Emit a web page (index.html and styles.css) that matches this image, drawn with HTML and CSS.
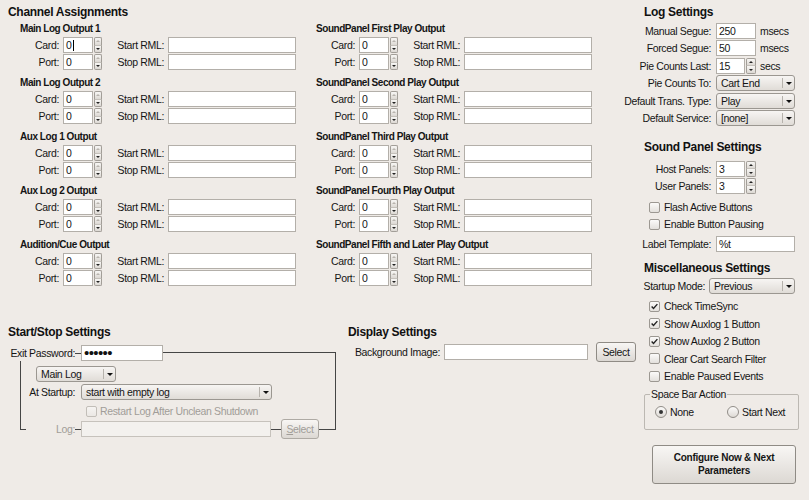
FILE: index.html
```html
<!DOCTYPE html>
<html>
<head>
<meta charset="utf-8">
<title>RDAirPlay Configuration</title>
<link rel="stylesheet" href="styles.css">
</head>
<body>
<div class="page">
  <div class="left">
    <div class="title ch-title">Channel Assignments</div>
    <div class="channels">
      <div class="col">
        <div class="group">
          <div class="ghead">Main Log Output 1</div>
          <div class="grow"><span class="lbl">Card:</span><span class="spin"><span class="field">0<span class="caret"></span></span><span class="btns"><i class="up dim"></i><i class="dn"></i></span></span><span class="lbl">Start RML:</span><span class="input"></span></div>
          <div class="grow"><span class="lbl">Port:</span><span class="spin"><span class="field">0</span><span class="btns"><i class="up dim"></i><i class="dn"></i></span></span><span class="lbl">Stop RML:</span><span class="input"></span></div>
        </div>
        <div class="group">
          <div class="ghead">Main Log Output 2</div>
          <div class="grow"><span class="lbl">Card:</span><span class="spin"><span class="field">0</span><span class="btns"><i class="up dim"></i><i class="dn"></i></span></span><span class="lbl">Start RML:</span><span class="input"></span></div>
          <div class="grow"><span class="lbl">Port:</span><span class="spin"><span class="field">0</span><span class="btns"><i class="up dim"></i><i class="dn"></i></span></span><span class="lbl">Stop RML:</span><span class="input"></span></div>
        </div>
        <div class="group">
          <div class="ghead">Aux Log 1 Output</div>
          <div class="grow"><span class="lbl">Card:</span><span class="spin"><span class="field">0</span><span class="btns"><i class="up dim"></i><i class="dn"></i></span></span><span class="lbl">Start RML:</span><span class="input"></span></div>
          <div class="grow"><span class="lbl">Port:</span><span class="spin"><span class="field">0</span><span class="btns"><i class="up dim"></i><i class="dn"></i></span></span><span class="lbl">Stop RML:</span><span class="input"></span></div>
        </div>
        <div class="group">
          <div class="ghead">Aux Log 2 Output</div>
          <div class="grow"><span class="lbl">Card:</span><span class="spin"><span class="field">0</span><span class="btns"><i class="up dim"></i><i class="dn"></i></span></span><span class="lbl">Start RML:</span><span class="input"></span></div>
          <div class="grow"><span class="lbl">Port:</span><span class="spin"><span class="field">0</span><span class="btns"><i class="up dim"></i><i class="dn"></i></span></span><span class="lbl">Stop RML:</span><span class="input"></span></div>
        </div>
        <div class="group">
          <div class="ghead">Audition/Cue Output</div>
          <div class="grow"><span class="lbl">Card:</span><span class="spin"><span class="field">0</span><span class="btns"><i class="up dim"></i><i class="dn"></i></span></span><span class="lbl">Start RML:</span><span class="input"></span></div>
          <div class="grow"><span class="lbl">Port:</span><span class="spin"><span class="field">0</span><span class="btns"><i class="up dim"></i><i class="dn"></i></span></span><span class="lbl">Stop RML:</span><span class="input"></span></div>
        </div>
      </div>
      <div class="col">
        <div class="group">
          <div class="ghead">SoundPanel First Play Output</div>
          <div class="grow"><span class="lbl">Card:</span><span class="spin"><span class="field">0</span><span class="btns"><i class="up dim"></i><i class="dn"></i></span></span><span class="lbl">Start RML:</span><span class="input"></span></div>
          <div class="grow"><span class="lbl">Port:</span><span class="spin"><span class="field">0</span><span class="btns"><i class="up dim"></i><i class="dn"></i></span></span><span class="lbl">Stop RML:</span><span class="input"></span></div>
        </div>
        <div class="group">
          <div class="ghead">SoundPanel Second Play Output</div>
          <div class="grow"><span class="lbl">Card:</span><span class="spin"><span class="field">0</span><span class="btns"><i class="up dim"></i><i class="dn"></i></span></span><span class="lbl">Start RML:</span><span class="input"></span></div>
          <div class="grow"><span class="lbl">Port:</span><span class="spin"><span class="field">0</span><span class="btns"><i class="up dim"></i><i class="dn"></i></span></span><span class="lbl">Stop RML:</span><span class="input"></span></div>
        </div>
        <div class="group">
          <div class="ghead">SoundPanel Third Play Output</div>
          <div class="grow"><span class="lbl">Card:</span><span class="spin"><span class="field">0</span><span class="btns"><i class="up dim"></i><i class="dn"></i></span></span><span class="lbl">Start RML:</span><span class="input"></span></div>
          <div class="grow"><span class="lbl">Port:</span><span class="spin"><span class="field">0</span><span class="btns"><i class="up dim"></i><i class="dn"></i></span></span><span class="lbl">Stop RML:</span><span class="input"></span></div>
        </div>
        <div class="group">
          <div class="ghead">SoundPanel Fourth Play Output</div>
          <div class="grow"><span class="lbl">Card:</span><span class="spin"><span class="field">0</span><span class="btns"><i class="up dim"></i><i class="dn"></i></span></span><span class="lbl">Start RML:</span><span class="input"></span></div>
          <div class="grow"><span class="lbl">Port:</span><span class="spin"><span class="field">0</span><span class="btns"><i class="up dim"></i><i class="dn"></i></span></span><span class="lbl">Stop RML:</span><span class="input"></span></div>
        </div>
        <div class="group">
          <div class="ghead">SoundPanel Fifth and Later Play Output</div>
          <div class="grow"><span class="lbl">Card:</span><span class="spin"><span class="field">0</span><span class="btns"><i class="up dim"></i><i class="dn"></i></span></span><span class="lbl">Start RML:</span><span class="input"></span></div>
          <div class="grow"><span class="lbl">Port:</span><span class="spin"><span class="field">0</span><span class="btns"><i class="up dim"></i><i class="dn"></i></span></span><span class="lbl">Stop RML:</span><span class="input"></span></div>
        </div>
      </div>
    </div>

    <div class="bottom">
      <div class="startstop">
        <div class="frame"></div>
        <div class="bracket"></div>
        <div class="title sst">Start/Stop Settings</div>
        <div class="ssrow r1"><span class="sl">Exit Password:</span><span class="dash"></span><span class="input pw">&#8226;&#8226;&#8226;&#8226;&#8226;&#8226;</span></div>
        <div class="ssrow r2"><span class="combo mainlog"><span class="ctext">Main Log</span><span class="carrow"></span></span></div>
        <div class="ssrow r3"><span class="sl">At Startup:</span><span class="combo startup"><span class="ctext">start with empty log</span><span class="carrow"></span></span></div>
        <div class="ssrow r4"><span class="cb disabled"></span><span class="distext">Restart Log After Unclean Shutdown</span></div>
        <div class="ssrow r5"><span class="sl distext">Log:</span><span class="dash"></span><span class="input login"></span><span class="spacer"></span><span class="btn selbtn distext"><u>S</u>elect</span></div>
      </div>
      <div class="display">
        <div class="title dst">Display Settings</div>
        <div class="drow"><span class="dl">Background Image:</span><span class="input bgimg"></span><span class="btn bgsel">Select</span></div>
      </div>
    </div>
  </div>

  <div class="right">
    <div class="title rt log-t">Log Settings</div>
    <div class="rows">
      <div class="frow"><span class="rl">Manual Segue:</span><span class="input w40 txt">250</span><span class="unit">msecs</span></div>
      <div class="frow"><span class="rl">Forced Segue:</span><span class="input w40 txt">50</span><span class="unit">msecs</span></div>
      <div class="frow"><span class="rl">Pie Counts Last:</span><span class="spin r"><span class="field">15</span><span class="btns"><i class="up"></i><i class="dn"></i></span></span><span class="unit">secs</span></div>
      <div class="frow"><span class="rl">Pie Counts To:</span><span class="combo w79"><span class="ctext">Cart End</span><span class="carrow"></span></span></div>
      <div class="frow"><span class="rl">Default Trans. Type:</span><span class="combo w79"><span class="ctext">Play</span><span class="carrow"></span></span></div>
      <div class="frow"><span class="rl">Default Service:</span><span class="combo w79"><span class="ctext">[none]</span><span class="carrow"></span></span></div>
    </div>

    <div class="title rt sp-t">Sound Panel Settings</div>
    <div class="rows tight">
      <div class="frow"><span class="rl">Host Panels:</span><span class="spin r"><span class="field">3</span><span class="btns"><i class="up"></i><i class="dn"></i></span></span></div>
      <div class="frow"><span class="rl">User Panels:</span><span class="spin r"><span class="field">3</span><span class="btns"><i class="up"></i><i class="dn"></i></span></span></div>
    </div>
    <div class="cbs sp-cbs">
      <div class="cbrow"><span class="cb"></span><span>Flash Active Buttons</span></div>
      <div class="cbrow"><span class="cb"></span><span>Enable Button Pausing</span></div>
    </div>
    <div class="frow tmpl"><span class="rl">Label Template:</span><span class="input w79 txt">%t</span></div>

    <div class="title rt misc-t">Miscellaneous Settings</div>
    <div class="frow startup-row"><span class="rl sm">Startup Mode:</span><span class="combo w86"><span class="ctext">Previous</span><span class="carrow"></span></span></div>
    <div class="cbs misc-cbs">
      <div class="cbrow"><span class="cb"><svg viewBox="0 0 11 11" width="9" height="9"><path d="M2 5.6 L4.3 8 L9 2.6" fill="none" stroke="#222" stroke-width="1.7"/></svg></span><span>Check TimeSync</span></div>
      <div class="cbrow"><span class="cb"><svg viewBox="0 0 11 11" width="9" height="9"><path d="M2 5.6 L4.3 8 L9 2.6" fill="none" stroke="#222" stroke-width="1.7"/></svg></span><span>Show Auxlog 1 Button</span></div>
      <div class="cbrow"><span class="cb"><svg viewBox="0 0 11 11" width="9" height="9"><path d="M2 5.6 L4.3 8 L9 2.6" fill="none" stroke="#222" stroke-width="1.7"/></svg></span><span>Show Auxlog 2 Button</span></div>
      <div class="cbrow"><span class="cb"></span><span>Clear Cart Search Filter</span></div>
      <div class="cbrow"><span class="cb"></span><span>Enable Paused Events</span></div>
    </div>
    <div class="gbox">
      <span class="legend">Space Bar Action</span>
      <div class="radios">
        <span class="ritem first"><span class="rb on"></span><span>None</span></span>
        <span class="ritem"><span class="rb"></span><span>Start Next</span></span>
      </div>
    </div>
    <div class="btn bigbtn">Configure Now &amp; Next<br>Parameters</div>
  </div>
</div>
</body>
</html>
```

FILE: styles.css
```css
* { box-sizing: border-box; }
html, body { margin: 0; padding: 0; }
body {
  background: #efebe7;
  font-family: "Liberation Sans", Arial, sans-serif;
  font-size: 10.5px;
  letter-spacing: -0.35px;
  color: #151515;
  width: 809px;
  height: 500px;
  overflow: hidden;
}
.page { display: flex; width: 809px; height: 500px; }
.left { width: 620px; flex: none; }
.right { width: 189px; flex: none; }

.title {
  font-weight: bold;
  font-size: 12px;
  letter-spacing: -0.3px;
  line-height: 14px;
  height: 14px;
  color: #111;
  white-space: nowrap;
}
.ch-title { padding-left: 8px; margin-top: 5px; margin-bottom: 1px; }

.channels { display: flex; padding-left: 20px; }
.col { width: 296px; flex: none; }
.group { height: 54px; }
.ghead {
  font-weight: bold;
  font-size: 10px;
  letter-spacing: -0.45px;
  line-height: 17px;
  height: 17px;
  white-space: nowrap;
}
.grow {
  display: grid;
  grid-template-columns: 39px 39px 58px 128px;
  column-gap: 4px;
  height: 17px;
}
.lbl { text-align: right; line-height: 16px; white-space: nowrap; }

.input {
  display: block;
  height: 16px;
  background: #fff;
  border: 1px solid #b3afa9;
  line-height: 14px;
  padding-left: 2px;
  white-space: nowrap;
}
.w40 { width: 40px; }
.w79 { width: 79px; }
.w86 { width: 86px; }

/* spin box */
.spin { display: flex; height: 16px; width: 39px; }
.spin .field {
  width: 30px;
  height: 16px;
  background: #fff;
  border: 1px solid #b3afa9;
  padding-left: 2px;
  line-height: 14px;
  display: flex;
  align-items: center;
}
.caret { display: inline-block; width: 1px; height: 11px; background: #000; margin-left: 1px; }
.spin .btns { width: 8px; margin-left: 1px; display: flex; flex-direction: column; }
.spin.r { width: 40px; }
.spin.r .field { width: 29px; }
.spin.r .btns { width: 10px; }
.spin .btns i {
  flex: 1;
  display: block;
  border: 1px solid #a29e98;
  background: linear-gradient(#f8f7f5, #dcd8d3);
  position: relative;
}
.spin .btns i.up { border-radius: 2px 2px 0 0; border-bottom-color: #c4c0ba; }
.spin .btns i.dn { border-radius: 0 0 2px 2px; border-top: none; }
.spin .btns i::after {
  content: "";
  position: absolute;
  left: 50%;
  top: 50%;
  margin-left: -2px;
  margin-top: -1px;
  border-left: 2px solid transparent;
  border-right: 2px solid transparent;
}
.spin .btns i.up::after { border-bottom: 2px solid #222; }
.spin .btns i.dn::after { border-top: 2px solid #222; }
.spin .btns i.dim::after { border-bottom-color: #b8b4ae; }

/* combo */
.combo {
  display: flex;
  height: 16px;
  border: 1px solid #9b9791;
  border-radius: 3px;
  background: linear-gradient(#f7f5f3, #e0dcd7);
}
.ctext { flex: 1; padding-left: 4px; line-height: 14px; white-space: nowrap; overflow: hidden; }
.carrow {
  width: 12px;
  flex: none;
  border-left: 1px solid #b6b2ac;
  margin: 2px 0;
  position: relative;
}
.carrow::after {
  content: "";
  position: absolute;
  left: 50%;
  top: 50%;
  margin-left: -3px;
  margin-top: -1px;
  border-left: 3px solid transparent;
  border-right: 3px solid transparent;
  border-top: 3px solid #111;
}

/* buttons */
.btn {
  display: flex;
  align-items: center;
  justify-content: center;
  border: 1px solid #8f8b85;
  border-radius: 3px;
  background: linear-gradient(#f8f6f4, #dcd8d3);
  white-space: nowrap;
}

/* checkbox / radio */
.cb {
  width: 11px;
  height: 11px;
  flex: none;
  border: 1px solid #9c9892;
  border-radius: 2px;
  background: linear-gradient(#fbfaf9, #e3e0dc);
  display: flex;
  align-items: center;
  justify-content: center;
}
.cb svg { display: block; }
.cb.disabled { border-color: #c2beb8; background: linear-gradient(#f6f4f2, #ebe8e4); }
.rb {
  width: 12px;
  height: 12px;
  flex: none;
  border: 1px solid #918d88;
  border-radius: 50%;
  background: linear-gradient(#fbfaf9, #dedad5);
  position: relative;
}
.rb.on::after {
  content: "";
  position: absolute;
  left: 3px;
  top: 3px;
  width: 4px;
  height: 4px;
  border-radius: 50%;
  background: #333;
}
.distext { color: #a19d98; }

/* start/stop */
.bottom { display: flex; margin-top: 34px; }
.startstop { position: relative; z-index: 0; width: 348px; flex: none; height: 120px; }
.frame {
  position: absolute;
  z-index: -1;
  left: 163px;
  top: 28px;
  width: 173px;
  height: 78px;
  border-top: 1px solid #454545;
  border-right: 1px solid #454545;
  border-bottom: 1px solid #454545;
}
.bracket {
  position: absolute;
  z-index: -1;
  left: 20px;
  top: 37px;
  width: 6px;
  height: 69px;
  border-left: 1px solid #454545;
  border-bottom: 1px solid #454545;
}
.sst { padding-left: 8px; line-height: 16px; height: 16px; }
.ssrow { display: flex; align-items: center; }
.sl { width: 75px; flex: none; text-align: right; white-space: nowrap; }
.dash { width: 6px; height: 1px; background: #454545; flex: none; }
.r1 { margin-top: 5px; height: 16px; }
.pw { width: 82px; font-size: 15px; letter-spacing: -0.6px; line-height: 13px; padding-left: 2px; color: #111; }
.r2 { margin-top: 5px; height: 16px; padding-left: 36px; }
.mainlog { width: 80px; }
.r3 { margin-top: 2px; height: 16px; }
.r3 .sl { margin-right: 6px; }
.startup { width: 191px; }
.r4 { margin-top: 4px; height: 14px; padding-left: 86px; gap: 3px; }
.r5 { margin-top: 1px; height: 20px; }
.login { width: 190px; background: #f3f1ee; border-color: #c6c2bc; }
.spacer { width: 10px; flex: none; }
.selbtn { width: 38px; height: 20px; border-color: #aeaaa4; }

.display { width: 288px; flex: none; }
.dst { line-height: 16px; height: 16px; }
.drow { display: flex; align-items: center; margin-top: 2px; height: 20px; }
.dl { width: 92px; flex: none; text-align: right; margin-right: 4px; white-space: nowrap; }
.bgimg { width: 144px; }
.bgsel { width: 40px; height: 20px; margin-left: 8px; }

/* right panel */
.rt { padding-left: 24px; }
.log-t { margin-top: 5px; margin-bottom: 4px; }
.rows { display: flex; flex-direction: column; gap: 1.4px; }
.rows.tight { gap: 1px; }
.frow { display: flex; align-items: center; height: 16px; }
.rl {
  width: 91px;
  flex: none;
  display: flex;
  justify-content: flex-end;
  white-space: nowrap;
  margin-right: 5px;
}
.rl.sm { width: 85px; margin-right: 4px; }
.txt { padding-left: 2px; }
.unit { margin-left: 4px; }
.sp-t { margin-top: 14px; margin-bottom: 7px; }
.cbs { padding-left: 29px; }
.cbrow { display: flex; align-items: center; gap: 4px; height: 17px; white-space: nowrap; }
.sp-cbs { margin-top: 5px; }
.tmpl { margin-top: 3px; }
.misc-t { margin-top: 9px; margin-bottom: 3px; }
.misc-cbs { margin-top: 3.5px; }
.misc-cbs .cbrow { height: 17.5px; }

.gbox {
  position: relative;
  margin-top: 9px;
  margin-left: 24px;
  width: 155px;
  height: 36px;
  border: 1px solid #bcb8b2;
  border-radius: 2px;
}
.legend {
  position: absolute;
  left: 5px;
  top: -7px;
  padding: 0 1px;
  background: #efebe7;
  line-height: 13px;
  white-space: nowrap;
}
.radios { display: flex; align-items: center; height: 34px; padding-left: 10px; }
.ritem { display: flex; align-items: center; gap: 3px; white-space: nowrap; }
.ritem.first { width: 72px; flex: none; }

.bigbtn {
  margin-top: 15px;
  margin-left: 32px;
  width: 144px;
  height: 39px;
  font-weight: bold;
  font-size: 10px;
  letter-spacing: -0.25px;
  line-height: 13px;
  text-align: center;
  white-space: normal;
}
```
